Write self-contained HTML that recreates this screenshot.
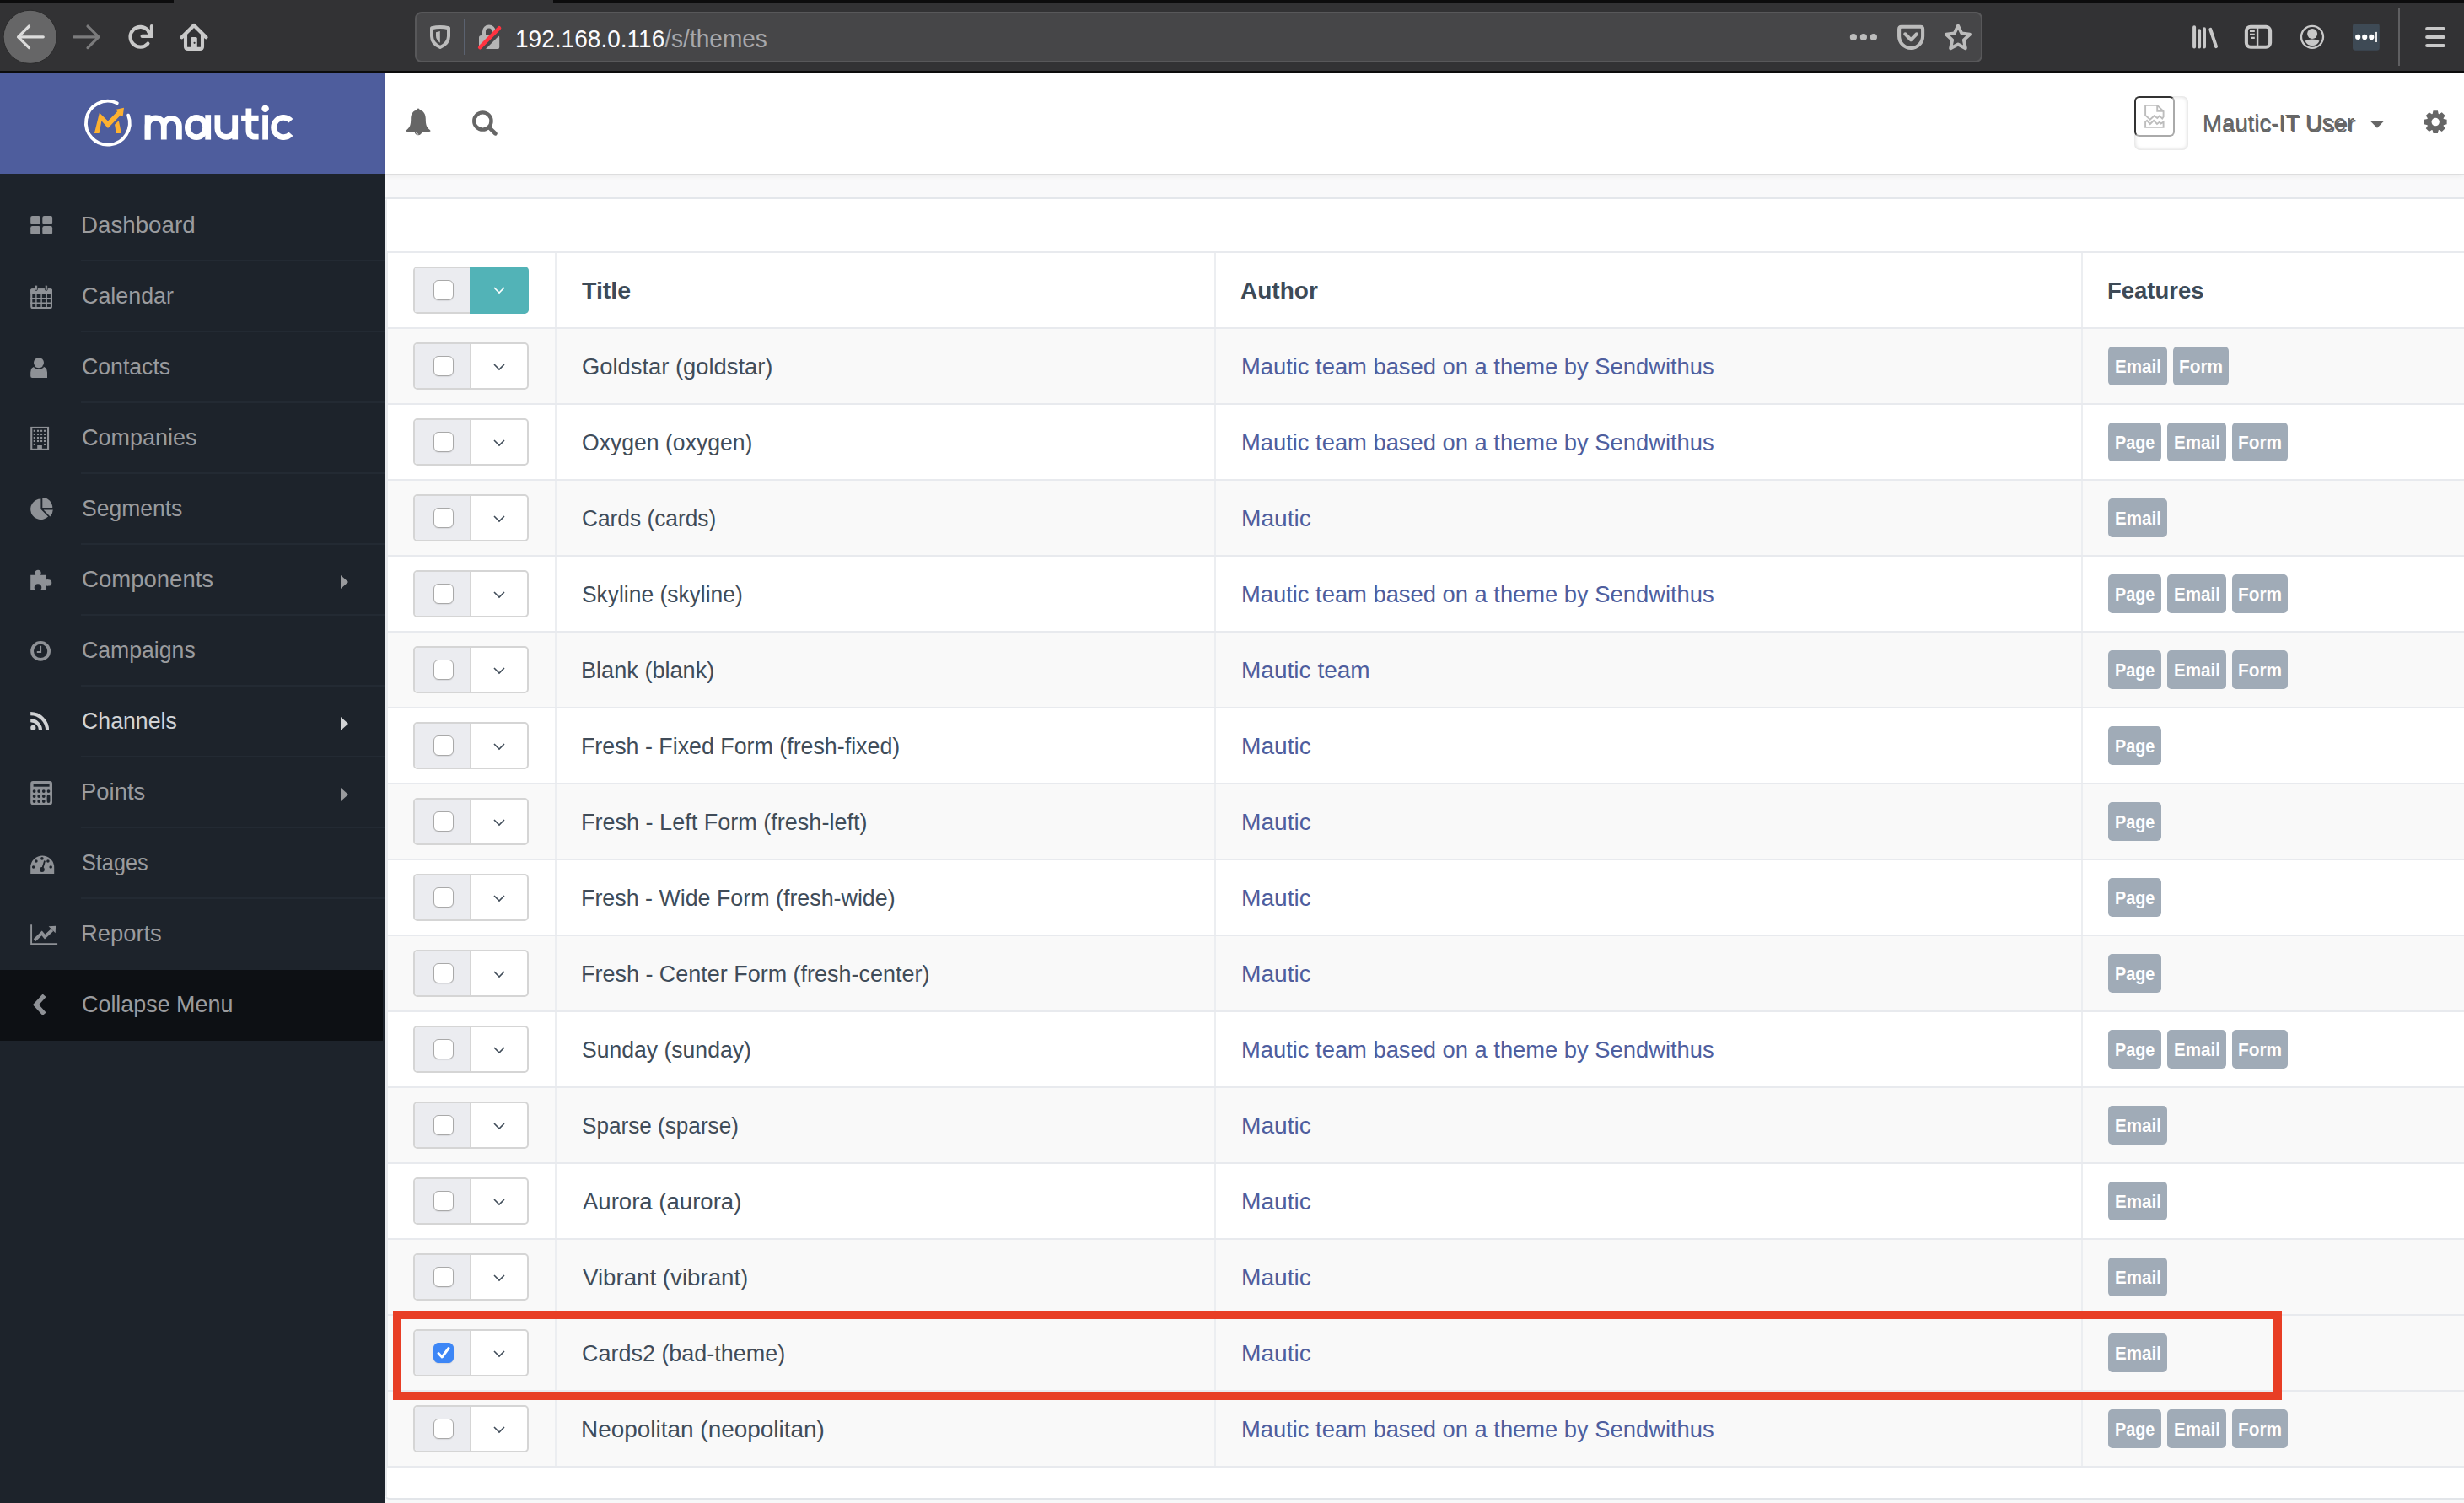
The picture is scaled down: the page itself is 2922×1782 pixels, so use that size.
<!DOCTYPE html>
<html><head><meta charset="utf-8"><style>
*{box-sizing:border-box;margin:0;padding:0}
html,body{width:2922px;height:1782px;overflow:hidden;background:#f7f7f8;font-family:"Liberation Sans",sans-serif;position:relative}
.abs{position:absolute}
#chrome{position:absolute;left:0;top:0;width:2922px;height:86px;background:#323234}
#tabstrip1{position:absolute;left:0;top:0;width:206px;height:4px;background:#0c0c0d}
#tabstrip2{position:absolute;left:656px;top:0;width:2266px;height:4px;background:#0c0c0d}
#chromeline{position:absolute;left:0;top:84px;width:2922px;height:2px;background:#0c0c0d}
#urlbar{display:none}
#url{position:absolute;left:611px;top:29px;font-size:30px;line-height:34px;color:#fbfbfe;white-space:nowrap;transform:scaleX(0.935);transform-origin:0 0}
#url span{color:#a8a8ab}
#sidebar{position:absolute;left:0;top:86px;width:456px;height:1696px;background:#1d232b}
#sbhead{position:absolute;left:0;top:86px;width:456px;height:120px;background:#4e5d9d}
.nav{position:absolute;left:0;width:456px;height:84px}
.nav .sep{position:absolute;left:96px;right:0;bottom:-1px;height:2px;background:#232a33}
.nav .t{position:absolute;left:98px;top:25px;font-size:27.5px;line-height:32px;color:#9a9b9e;white-space:nowrap}
.nav.act .t{color:#d2d3d5}
.nav svg{position:absolute}
.nav .arr{position:absolute;left:404px;top:37px;width:0;height:0;border-top:8px solid transparent;border-bottom:8px solid transparent;border-left:9.5px solid #9a9b9e}
.nav.act .arr{border-left-color:#d2d3d5}
#collapse{position:absolute;left:0;top:1150px;width:454px;height:84px;background:#0d1014}
#header{position:absolute;left:456px;top:86px;width:2466px;height:120px;background:#fff;box-shadow:0 1px 1px rgba(0,0,0,0.07),0 3px 7px rgba(0,0,0,0.06);z-index:2}
#band{position:absolute;left:456px;top:206px;width:2466px;height:30px;background:#f9f9fa;border-bottom:2px solid #e4e7eb}
#panel{position:absolute;left:456px;top:236px;width:2466px;height:1542px;background:#fff;border-left:1px solid #fff;border-bottom:2px solid #e2e5e9;border-radius:0 0 0 6px}
#panelb{position:absolute;left:457px;top:236px;width:2px;height:1539px;background:#e9ebee;border-radius:3px 0 0 3px}
.row{position:absolute;left:458px;width:2464px;height:90px;border-bottom:2px solid #e8eaee;border-left:2px solid #e9ebee}
.row.g{background:#f9f9f9}
.vd{position:absolute;top:0;bottom:0;width:2px;background:#eceef1}
.cell{position:absolute;top:2.5px;height:89px;line-height:89px;font-size:27px;white-space:nowrap}
.hdr .cell{top:1px}
.title{left:231px;color:#4b5866}
.author{left:1012px;color:#4e5e9e}
.feat{left:2041px}
.hd{font-weight:bold;color:#3d4a57;font-size:28px}
.btng{position:absolute;left:30px;top:16px;width:137px;height:56px;border:2px solid #d5d5d5;border-radius:5px;background:#fff;overflow:hidden}
.btng .l{position:absolute;left:0;top:0;width:67px;height:52px;background:#ebecf0;border-right:2px solid #d5d5d5}
.btng .teal{position:absolute;left:65px;top:-2px;width:70px;height:56px;background:#52b3b7;border-radius:0 5px 5px 0}
.btng.tealg{overflow:visible;background:#ebecf0;top:16px}
.btng.tealg .l{border-right:none;width:67px}
.cb{position:absolute;left:22px;top:13.5px;width:24px;height:24px;border:1.5px solid #a9a9a9;border-radius:6px;background:#fff;box-shadow:0 1px 1px rgba(0,0,0,0.08)}
.cb.chk{background:#3d86f6;border-color:#3d86f6}
.chev{position:absolute;left:91.5px;top:21px}
.teal .chev{left:26.5px;top:22px}
.bdg{position:absolute;top:21px;height:46px;background:#a0abb7;color:#fff;font-weight:bold;font-size:21.5px;border-radius:5px}
#redbox{position:absolute;left:466px;top:1554px;width:2240px;height:106px;border:10px solid #e83e25}

</style></head><body>
<div id="chrome"></div><div id="tabstrip1"></div><div id="tabstrip2"></div><div id="chromeline"></div>
<svg class="abs" style="left:0;top:0" width="660" height="86" viewBox="0 0 660 86">
 <circle cx="35.7" cy="43.8" r="31.6" fill="#666667" stroke="#2a2a2b" stroke-width="1"/>
 <path d="M21.5,43.8 H51.3 M34.5,31 L21.5,43.8 L34.5,56.6" fill="none" stroke="#dcdcdc" stroke-width="3.2" stroke-linecap="round" stroke-linejoin="round"/>
 <path d="M87.5,43.8 H117 M104,31 L117,43.8 L104,56.6" fill="none" stroke="#7b7b7c" stroke-width="3.2" stroke-linecap="round" stroke-linejoin="round"/>
 <path d="M175.4,51.6 A11.9,11.9 0 1 1 175.6,36.2" fill="none" stroke="#c9c9c9" stroke-width="4.2" stroke-linecap="round"/>
 <path d="M179.9,31.2 V42.9 H168.6" fill="none" stroke="#c9c9c9" stroke-width="4.2" stroke-linecap="round" stroke-linejoin="round"/><path d="M176,37.5 L179.9,42.9" stroke="#c9c9c9" stroke-width="4.2" stroke-linecap="round"/>
 <path d="M215.6,44.2 L230,30 L244.4,44.2" fill="none" stroke="#c9c9c9" stroke-width="4.4" stroke-linecap="round" stroke-linejoin="round"/>
 <path d="M220,41.5 V55.2 Q220,57.9 222.7,57.9 H237.3 Q240,57.9 240,55.2 V41.5" fill="none" stroke="#c9c9c9" stroke-width="4.1" stroke-linejoin="round"/>
 <path d="M226,58 V45.6 Q226,43.9 227.7,43.9 H232.1 Q233.8,43.9 233.8,45.6 V58 Z" fill="#c9c9c9"/>
 <circle cx="230.6" cy="50.8" r="1.1" fill="#323234"/>
</svg>
<div class="abs" style="left:492px;top:14px;width:1859px;height:60px;background:#464648;border:2px solid #58585a;border-radius:8px"></div>
<svg class="abs" style="left:490px;top:0" width="130" height="86" viewBox="490 0 130 86">
 <path d="M512,33.2 Q522,30.6 532,33.2 V43 Q532,51.5 522,56 Q512,51.5 512,43 Z" fill="none" stroke="#bcbcbc" stroke-width="4" stroke-linejoin="round"/>
 <path d="M517,38.3 L521.8,37 V50.8 Q517,47 517,42.5 Z" fill="#bcbcbc"/>
 <rect x="550" y="23" width="2" height="42" fill="#5b6270"/>
 <rect x="568" y="41.9" width="24.2" height="16.1" rx="2.6" fill="#b5b5b5"/>
 <path d="M574,42.5 V37.4 A5.9,5.9 0 0 1 585.8,37.4 V42.5" fill="none" stroke="#b5b5b5" stroke-width="4"/>
 <path d="M569.5,56.6 L592.5,33.4" stroke="#464648" stroke-width="8" stroke-linecap="round" transform="translate(1.2,1.2)"/>
 <path d="M569.2,56.2 L592,33.3" stroke="#ff3340" stroke-width="4.6" stroke-linecap="round"/>
</svg>
<svg class="abs" style="left:2180px;top:0" width="742" height="86" viewBox="2180 0 742 86">
 <circle cx="2197.9" cy="44" r="4.1" fill="#bcbcbc"/><circle cx="2209.9" cy="44" r="4.1" fill="#bcbcbc"/><circle cx="2221.9" cy="44" r="4.1" fill="#bcbcbc"/>
 <path d="M2252.1,43 V34.5 Q2252.1,31.8 2254.8,31.8 H2277.4 Q2280.1,31.8 2280.1,34.5 V43 A14,14 0 0 1 2252.1,43 Z" fill="none" stroke="#bcbcbc" stroke-width="4.1" stroke-linejoin="round"/>
 <path d="M2259.3,40.3 L2266.1,47.2 L2272.9,40.3" fill="none" stroke="#bcbcbc" stroke-width="4.1" stroke-linecap="round" stroke-linejoin="round"/>
 <path d="M2322,30.5 L2326.3,39.5 L2336,40.7 L2328.9,47.4 L2330.8,57.2 L2322,52.4 L2313.2,57.2 L2315.1,47.4 L2308,40.7 L2317.7,39.5 Z" fill="none" stroke="#bcbcbc" stroke-width="4" stroke-linejoin="round"/>
 <path d="M2602.1,32.3 V55.6 M2608.1,36.3 V55.6 M2614,34.2 V55.6 M2621.3,34.8 L2628,55.2" fill="none" stroke="#c8c8c8" stroke-width="4" stroke-linecap="round"/>
 <rect x="2663.9" y="31.8" width="28.2" height="24" rx="5" fill="none" stroke="#c8c8c8" stroke-width="4.1"/>
 <rect x="2675.9" y="32" width="2.4" height="24" fill="#c8c8c8"/>
 <path d="M2668,36.9 H2673.8 M2668,40.8 H2673.8 M2670,44.8 H2673.8" stroke="#c8c8c8" stroke-width="2.2"/>
 <circle cx="2742" cy="43.8" r="13" fill="none" stroke="#c8c8c8" stroke-width="2.3"/>
 <circle cx="2742.1" cy="40" r="6" fill="#c8c8c8"/>
 <path d="M2733.5,48.6 Q2742,44.5 2750.5,48.6 Q2748,54.3 2742,54.3 Q2736,54.3 2733.5,48.6 Z" fill="#c8c8c8"/>
 <rect x="2790" y="28" width="31.8" height="31.8" rx="3.2" fill="#3e4a55"/>
 <circle cx="2796.2" cy="43.9" r="3.1" fill="#fff"/><circle cx="2804.2" cy="43.9" r="3.1" fill="#fff"/><circle cx="2812.3" cy="43.9" r="3.1" fill="#fff"/>
 <rect x="2816.9" y="37.9" width="2.1" height="12.1" fill="#e8e8e8"/>
 <rect x="2844" y="10" width="2" height="68" fill="#5f5f61"/>
 <path d="M2878.1,33.9 H2897.9 M2878.1,43.9 H2897.9 M2878.1,54 H2897.9" stroke="#c8c8c8" stroke-width="4" stroke-linecap="round"/>
</svg>

<div id="url">192.168.0.116<span>/s/themes</span></div>
<div id="sidebar"></div><div id="sbhead"></div>
<svg class="abs" style="left:80px;top:100px" width="290" height="95" viewBox="80 100 290 95">
 <path d="M152.1,136.6 A25.9,25.9 0 1 1 138.85,122.3" fill="none" stroke="#fff" stroke-width="3.8" stroke-linecap="round"/>
 <path d="M111.9,157.9 L117.6,157.9 L120.4,143.2 L128,151.9 L143.2,136.2 L145.6,138.3 L147,127.8 L136.8,129.9 L139.3,132.1 L128,143.6 L117.9,133.7 Z" fill="#fdb130"/>
 <path d="M136,147.8 L140.8,143 L143.9,157.9 L137.9,157.9 Z" fill="#fdb130"/>
 <g fill="none" stroke="#fff" stroke-width="6.8">
  <path d="M175.1,165.6 V149.5 A9.6,9.6 0 0 1 194.3,149.5 V165.6 M194.3,149.5 A9.05,9.05 0 0 1 212.4,149.5 V165.6"/>
  <path d="M175.1,165.6 V136.2"/>
  <ellipse cx="233" cy="151" rx="10.6" ry="11.6"/>
  <path d="M246.7,136.2 V165.6"/>
  <path d="M257.9,136.2 V152 A10.4,10.4 0 0 0 278.7,152 M278.7,136.2 V165.6"/>
  <path d="M294.9,128.6 V154 Q294.9,162.2 302.5,162.2 H306.6 M286.1,140.1 H306.6"/>
  <path d="M314.6,136.2 V165.6"/>
  <path d="M344.9,143.3 A11.6,11.6 0 1 0 344.9,158.7"/>
 </g>
 <circle cx="314.6" cy="128.8" r="4.3" fill="#fff"/>
</svg>

<div class="nav" style="top:225px"><div style="position:absolute;left:96.18px;top:22px;font-size:27.5px;line-height:40px;color:#9a9b9e;white-space:nowrap;transform:scaleX(1.0076);transform-origin:0 0;">Dashboard</div><div class="sep"></div></div>
<div class="nav" style="top:309px"><div style="position:absolute;left:97.22px;top:22px;font-size:27.5px;line-height:40px;color:#9a9b9e;white-space:nowrap;transform:scaleX(0.9764);transform-origin:0 0;">Calendar</div><div class="sep"></div></div>
<div class="nav" style="top:393px"><div style="position:absolute;left:97.23px;top:22px;font-size:27.5px;line-height:40px;color:#9a9b9e;white-space:nowrap;transform:scaleX(0.9692);transform-origin:0 0;">Contacts</div><div class="sep"></div></div>
<div class="nav" style="top:477px"><div style="position:absolute;left:97.22px;top:22px;font-size:27.5px;line-height:40px;color:#9a9b9e;white-space:nowrap;transform:scaleX(0.9818);transform-origin:0 0;">Companies</div><div class="sep"></div></div>
<div class="nav" style="top:561px"><div style="position:absolute;left:97.24px;top:22px;font-size:27.5px;line-height:40px;color:#9a9b9e;white-space:nowrap;transform:scaleX(0.9639);transform-origin:0 0;">Segments</div><div class="sep"></div></div>
<div class="nav" style="top:645px"><div style="position:absolute;left:97.20px;top:22px;font-size:27.5px;line-height:40px;color:#9a9b9e;white-space:nowrap;transform:scaleX(1.0013);transform-origin:0 0;">Components</div><div class="arr"></div><div class="sep"></div></div>
<div class="nav" style="top:729px"><div style="position:absolute;left:97.23px;top:22px;font-size:27.5px;line-height:40px;color:#9a9b9e;white-space:nowrap;transform:scaleX(0.9686);transform-origin:0 0;">Campaigns</div><div class="sep"></div></div>
<div class="nav act" style="top:813px"><div style="position:absolute;left:97.23px;top:22px;font-size:27.5px;line-height:40px;color:#d2d3d5;white-space:nowrap;transform:scaleX(0.9711);transform-origin:0 0;">Channels</div><div class="arr"></div><div class="sep"></div></div>
<div class="nav" style="top:897px"><div style="position:absolute;left:96.21px;top:22px;font-size:27.5px;line-height:40px;color:#9a9b9e;white-space:nowrap;transform:scaleX(0.9973);transform-origin:0 0;">Points</div><div class="arr"></div><div class="sep"></div></div>
<div class="nav" style="top:981px"><div style="position:absolute;left:97.28px;top:22px;font-size:27.5px;line-height:40px;color:#9a9b9e;white-space:nowrap;transform:scaleX(0.9179);transform-origin:0 0;">Stages</div><div class="sep"></div></div>
<div class="nav" style="top:1065px"><div style="position:absolute;left:96.21px;top:22px;font-size:27.5px;line-height:40px;color:#9a9b9e;white-space:nowrap;transform:scaleX(0.9946);transform-origin:0 0;">Reports</div></div>
<svg class="abs" style="left:0;top:200px;z-index:2" width="456" height="1050" viewBox="0 200 456 1050">
<rect x="36.2" y="255.9" width="11.8" height="10.1" rx="2.2" fill="#8e9196"/>
<rect x="50.3" y="255.9" width="11.8" height="10.1" rx="2.2" fill="#8e9196"/>
<rect x="36.2" y="268.0" width="11.8" height="10.1" rx="2.2" fill="#8e9196"/>
<rect x="50.3" y="268.0" width="11.8" height="10.1" rx="2.2" fill="#8e9196"/>
<rect x="37.25" y="343.25" width="23.7" height="21.7" rx="1.5" fill="none" stroke="#8e9196" stroke-width="2.1"/><rect x="36.2" y="342.2" width="25.8" height="6.3" rx="1.5" fill="#8e9196"/><path d="M36.2,353.6 H62 M36.2,359.2 H62 M42.9,348 V366 M49.1,348 V366 M55.2,348 V366" stroke="#8e9196" stroke-width="1.4"/>
<rect x="41.5" y="338" width="2.9" height="6.5" rx="1.4" fill="#8e9196"/><rect x="53.4" y="338" width="2.9" height="6.5" rx="1.4" fill="#8e9196"/>
<rect x="41.5" y="338" width="2.9" height="6.5" rx="1.4" fill="none" stroke="#1d232b" stroke-width="0.8"/><rect x="53.4" y="338" width="2.9" height="6.5" rx="1.4" fill="none" stroke="#1d232b" stroke-width="0.8"/>
<circle cx="46" cy="429.9" r="6" fill="#8e9196"/>
<path d="M36.2,448.1 V441.5 Q36.2,434.5 43,434.5 H49.2 Q56,434.5 56,441.5 V448.1 Q56,448.1 54,448.1 H38.2 Q36.2,448.1 36.2,446 Z" fill="#8e9196"/>
<path d="M40.5,435.2 Q46,438.8 51.5,435.2" fill="none" stroke="#1d232b" stroke-width="1.4"/>
<rect x="37.25" y="506.95" width="19.8" height="25.9" fill="none" stroke="#8e9196" stroke-width="2.1"/>
<rect x="39.75" y="509.75" width="2.1" height="2.1" fill="#8e9196"/>
<rect x="39.75" y="513.95" width="2.1" height="2.1" fill="#8e9196"/>
<rect x="39.75" y="517.95" width="2.1" height="2.1" fill="#8e9196"/>
<rect x="39.75" y="521.95" width="2.1" height="2.1" fill="#8e9196"/>
<rect x="43.95" y="509.75" width="2.1" height="2.1" fill="#8e9196"/>
<rect x="43.95" y="513.95" width="2.1" height="2.1" fill="#8e9196"/>
<rect x="43.95" y="517.95" width="2.1" height="2.1" fill="#8e9196"/>
<rect x="43.95" y="521.95" width="2.1" height="2.1" fill="#8e9196"/>
<rect x="48.050000000000004" y="509.75" width="2.1" height="2.1" fill="#8e9196"/>
<rect x="48.050000000000004" y="513.95" width="2.1" height="2.1" fill="#8e9196"/>
<rect x="48.050000000000004" y="517.95" width="2.1" height="2.1" fill="#8e9196"/>
<rect x="48.050000000000004" y="521.95" width="2.1" height="2.1" fill="#8e9196"/>
<rect x="51.95" y="509.75" width="2.1" height="2.1" fill="#8e9196"/>
<rect x="51.95" y="513.95" width="2.1" height="2.1" fill="#8e9196"/>
<rect x="51.95" y="517.95" width="2.1" height="2.1" fill="#8e9196"/>
<rect x="51.95" y="521.95" width="2.1" height="2.1" fill="#8e9196"/>
<rect x="39.75" y="525.9" width="2.1" height="2.1" fill="#8e9196"/>
<rect x="51.95" y="525.9" width="2.1" height="2.1" fill="#8e9196"/>
<rect x="44.2" y="528" width="5.7" height="5" fill="#8e9196"/>
<path d="M48.4,603.8 V591.55 A12.25,12.25 0 1 0 57.06,612.46 Z" fill="#8e9196"/>
<path d="M50.3,602 V590.1 A11.9,11.9 0 0 1 62.2,602 Z" fill="#8e9196"/>
<path d="M51.6,604.6 H62.8 A11.8,11.8 0 0 1 59.4,612.4 Z" fill="#8e9196"/>
<path d="M36.2,681.7 H42.2 Q41.2,680.5 41.6,678.6 A3.6,3.6 0 0 1 48.6,678.6 Q49,680.5 48,681.7 H54.1 V687.6 Q55.5,686.8 57.6,687.2 A3.6,3.6 0 0 1 57.6,694.6 Q55.5,695 54.1,694 V699 H48.5 Q49.8,697.5 49.2,695.6 A4.3,4.3 0 0 0 40.8,695.6 Q40.2,697.5 41.5,699 H36.2 Z" fill="#8e9196"/>
<circle cx="48.1" cy="771.9" r="10" fill="none" stroke="#8e9196" stroke-width="3.8"/>
<path d="M48.1,765.8 V773 H43.8" fill="none" stroke="#8e9196" stroke-width="2"/>
<circle cx="39.3" cy="862.9" r="3.1" fill="#d0d1d3"/>
<path d="M36.2,854.1 A11.9,11.9 0 0 1 48.1,866 M36.2,846.1 A19.9,19.9 0 0 1 56.1,866" fill="none" stroke="#d0d1d3" stroke-width="4.1"/>
<rect x="37.3" y="927.1" width="23.6" height="26" rx="1.8" fill="none" stroke="#8e9196" stroke-width="2.2"/>
<rect x="37.3" y="927.1" width="23.6" height="7.6" fill="#8e9196"/>
<rect x="39.6" y="929.3" width="19" height="3.4" fill="#1d232b"/>
<rect x="37.3" y="934" width="23.6" height="18" fill="#8e9196"/>
<circle cx="40.6" cy="938.1" r="1.9" fill="#1d232b"/>
<circle cx="46.2" cy="938.1" r="1.9" fill="#1d232b"/>
<circle cx="51.8" cy="938.1" r="1.9" fill="#1d232b"/>
<circle cx="40.6" cy="944.1" r="1.9" fill="#1d232b"/>
<circle cx="46.2" cy="944.1" r="1.9" fill="#1d232b"/>
<circle cx="51.8" cy="944.1" r="1.9" fill="#1d232b"/>
<circle cx="40.6" cy="950.0" r="1.9" fill="#1d232b"/>
<circle cx="46.2" cy="950.0" r="1.9" fill="#1d232b"/>
<circle cx="51.8" cy="950.0" r="1.9" fill="#1d232b"/>
<circle cx="57.5" cy="938.1" r="1.9" fill="#1d232b"/>
<rect x="55.6" y="942.2" width="3.8" height="9.7" rx="1.9" fill="#1d232b"/>
<path d="M36.2,1036.1 V1028.5 A14,14 0 0 1 64.2,1028.5 V1036.1 Z" fill="#8e9196"/>
<circle cx="42.9" cy="1021" r="1.8" fill="#1d232b"/>
<circle cx="49.9" cy="1017.9" r="1.8" fill="#1d232b"/>
<circle cx="56.9" cy="1021" r="1.8" fill="#1d232b"/>
<circle cx="39.7" cy="1028" r="1.8" fill="#1d232b"/>
<circle cx="60.2" cy="1028" r="1.8" fill="#1d232b"/>
<circle cx="49.9" cy="1031" r="2.9" fill="#1d232b"/>
<path d="M49.9,1031 L52.9,1021.3" stroke="#1d232b" stroke-width="1.9" stroke-linecap="round"/>
<path d="M37.1,1096.2 V1119.1 H68.1" fill="none" stroke="#8e9196" stroke-width="1.9"/>
<path d="M41.1,1114.6 L49.6,1106.3 L53.2,1110.6 L61.9,1102.6" fill="none" stroke="#8e9196" stroke-width="3.9"/>
<path d="M57.6,1098.2 L66.1,1097.8 L65.7,1106.2 Z" fill="#8e9196"/>
</svg>
<div id="collapse"><svg class="abs" style="left:36px;top:24px" width="24" height="36" viewBox="0 0 24 36"><path d="M16.6 6.2 L6.6 17.3 L16.6 28.3" fill="none" stroke="#8e9196" stroke-width="5.4" stroke-linejoin="miter"/></svg><div style="position:absolute;left:97.22px;top:21px;font-size:27.5px;line-height:40px;color:#9a9b9e;white-space:nowrap;transform:scaleX(0.9779);transform-origin:0 0;">Collapse Menu</div></div>
<div id="header"></div>
<svg class="abs" style="left:456px;top:86px;z-index:3" width="2466" height="120" viewBox="456 86 2466 120">
<path d="M496,130.6 C489.5,130.6 487.2,135.5 487.2,141 C487.2,148.5 486,150.8 482,154.2 Q480.6,155.9 483,155.9 H509 Q511.4,155.9 510,154.2 C506,150.8 504.8,148.5 504.8,141 C504.8,135.5 502.5,130.6 496,130.6 Z" fill="#666666"/>
<circle cx="496" cy="130.2" r="1.7" fill="#666666"/>
<path d="M491.7,156 A4.3,4.3 0 0 0 500.3,156 Z" fill="#666666"/>
<path d="M493.6,156.6 A2.6,2.6 0 0 0 496.2,159.2" fill="none" stroke="#fff" stroke-width="0.9"/>
<circle cx="572.4" cy="143.5" r="10.15" fill="none" stroke="#666666" stroke-width="4.4"/>
<path d="M580.3,151.4 L587.4,158.3" stroke="#666666" stroke-width="4.8" stroke-linecap="round"/>
<path d="M2811.4,144.1 H2826.6 L2819,151.7 Z" fill="#666666"/>
<path d="M2884.67,134.92 L2885.47,131.18 L2890.93,131.18 L2891.73,134.92 L2892.55,135.26 L2895.76,133.18 L2899.62,137.04 L2897.54,140.25 L2897.88,141.07 L2901.62,141.87 L2901.62,147.33 L2897.88,148.13 L2897.54,148.95 L2899.62,152.16 L2895.76,156.02 L2892.55,153.94 L2891.73,154.28 L2890.93,158.02 L2885.47,158.02 L2884.67,154.28 L2883.85,153.94 L2880.64,156.02 L2876.78,152.16 L2878.86,148.95 L2878.52,148.13 L2874.78,147.33 L2874.78,141.87 L2878.52,141.07 L2878.86,140.25 L2876.78,137.04 L2880.64,133.18 L2883.85,135.26 Z M2892.8999999999996,144.6 A4.7,4.7 0 1 0 2883.5,144.6 A4.7,4.7 0 1 0 2892.8999999999996,144.6 Z" fill="#666666" fill-rule="evenodd"/>
</svg>
<div class="abs" style="left:2531px;top:114px;width:64px;height:64px;border-radius:7px;background:#fff;box-shadow:inset 0 0 4px 1px rgba(0,0,0,0.14);z-index:3"></div>
<div class="abs" style="left:2531px;top:114px;width:48px;height:48px;border-radius:6px;border-top:2px solid #333;border-left:2px solid #333;border-right:2px solid #aaa;border-bottom:2px solid #aaa;background:#fff;z-index:3"></div>
<svg class="abs" style="left:2540px;top:120px;z-index:4" width="30" height="36" viewBox="2540 120 30 36"><path d="M2544.1,136.6 V124.9 H2558.2 L2565.6,131.9 V138.5 L2564.2,140.6 L2561,137.4 L2558.3,140 L2554.6,137.2 L2549.8,141.6 Z" fill="none" stroke="#bdbdbd" stroke-width="1.9" stroke-linejoin="miter"/><path d="M2558.2,124.9 V131.9 H2565.6" fill="none" stroke="#bdbdbd" stroke-width="1.9"/><path d="M2544.1,144.6 L2546.1,142.8 L2549.8,147 L2554.1,142.8 L2558,147 L2561,144.6 L2562.6,146.5 L2565.6,144.6 V150.9 H2544.1 Z" fill="none" stroke="#bdbdbd" stroke-width="1.9" stroke-linejoin="miter"/></svg>
<div class="abs" style="left:2612px;top:130px;font-size:27.5px;line-height:32px;color:#666;white-space:nowrap;z-index:3">Mautic-IT User</div>
<div style="position:absolute;left:2611.98px;top:128px;font-size:27.5px;line-height:40px;color:#666;white-space:nowrap;transform:scaleX(1.0112);transform-origin:0 0;z-index:3">Mautic-IT User</div>
<div id="band"></div><div id="panel"></div><div id="panelb"></div>
<div class="row hdr" style="top:298px;border-top:2px solid #e8eaee;height:92px"><div class="vd" style="left:198px"></div><div class="vd" style="left:980px"></div><div class="vd" style="left:2008px"></div><div class="btng tealg"><div class="l"><div class="cb"></div></div><div class="teal"><svg class="chev" width="16" height="12" viewBox="0 0 16 12"><path d="M2 3 L8 9 L14 3" fill="none" stroke="#fff" stroke-width="1.6"/></svg></div></div><div style="position:absolute;left:230.00px;top:25px;font-size:28px;line-height:40px;font-weight:bold;color:#3d4a57;white-space:nowrap;transform:scaleX(1.0179);transform-origin:0 0;">Title</div><div style="position:absolute;left:1011.40px;top:25px;font-size:28px;line-height:40px;font-weight:bold;color:#3d4a57;white-space:nowrap;transform:scaleX(1.0011);transform-origin:0 0;">Author</div><div style="position:absolute;left:2039.44px;top:25px;font-size:28px;line-height:40px;font-weight:bold;color:#3d4a57;white-space:nowrap;transform:scaleX(0.9807);transform-origin:0 0;">Features</div></div>
<div class="row g" style="top:390px"><div class="vd" style="left:198px"></div><div class="vd" style="left:980px"></div><div class="vd" style="left:2008px"></div><div class="btng"><div class="l"><div class="cb"></div></div><svg class="chev" width="16" height="12" viewBox="0 0 16 12"><path d="M2 3 L8 9 L14 3" fill="none" stroke="#404c59" stroke-width="1.6"/></svg></div><div style="position:absolute;left:229.99px;top:25px;font-size:27px;line-height:40px;color:#404c59;white-space:nowrap;transform:scaleX(1.0127);transform-origin:0 0;">Goldstar (goldstar)</div><div style="position:absolute;left:1012.18px;top:25px;font-size:27px;line-height:40px;color:#4e5e9e;white-space:nowrap;transform:scaleX(1.0123);transform-origin:0 0;">Mautic team based on a theme by Sendwithus</div><div class="bdg" style="left:2040px;width:70px"><div style="position:absolute;left:7.74px;top:9px;line-height:30px;transform:scaleX(0.9564);transform-origin:0 0">Email</div></div><div class="bdg" style="left:2116.8px;width:66.5px"><div style="position:absolute;left:7.13px;top:9px;line-height:30px;transform:scaleX(0.9673);transform-origin:0 0">Form</div></div></div>
<div class="row" style="top:480px"><div class="vd" style="left:198px"></div><div class="vd" style="left:980px"></div><div class="vd" style="left:2008px"></div><div class="btng"><div class="l"><div class="cb"></div></div><svg class="chev" width="16" height="12" viewBox="0 0 16 12"><path d="M2 3 L8 9 L14 3" fill="none" stroke="#404c59" stroke-width="1.6"/></svg></div><div style="position:absolute;left:230.02px;top:25px;font-size:27px;line-height:40px;color:#404c59;white-space:nowrap;transform:scaleX(0.9847);transform-origin:0 0;">Oxygen (oxygen)</div><div style="position:absolute;left:1012.18px;top:25px;font-size:27px;line-height:40px;color:#4e5e9e;white-space:nowrap;transform:scaleX(1.0123);transform-origin:0 0;">Mautic team based on a theme by Sendwithus</div><div class="bdg" style="left:2040px;width:63px"><div style="position:absolute;left:7.58px;top:9px;line-height:30px;transform:scaleX(0.9200);transform-origin:0 0">Page</div></div><div class="bdg" style="left:2109.8px;width:70px"><div style="position:absolute;left:7.74px;top:9px;line-height:30px;transform:scaleX(0.9564);transform-origin:0 0">Email</div></div><div class="bdg" style="left:2186.6000000000004px;width:66.5px"><div style="position:absolute;left:7.13px;top:9px;line-height:30px;transform:scaleX(0.9673);transform-origin:0 0">Form</div></div></div>
<div class="row g" style="top:570px"><div class="vd" style="left:198px"></div><div class="vd" style="left:980px"></div><div class="vd" style="left:2008px"></div><div class="btng"><div class="l"><div class="cb"></div></div><svg class="chev" width="16" height="12" viewBox="0 0 16 12"><path d="M2 3 L8 9 L14 3" fill="none" stroke="#404c59" stroke-width="1.6"/></svg></div><div style="position:absolute;left:230.03px;top:25px;font-size:27px;line-height:40px;color:#404c59;white-space:nowrap;transform:scaleX(0.9733);transform-origin:0 0;">Cards (cards)</div><div style="position:absolute;left:1012.12px;top:25px;font-size:27px;line-height:40px;color:#4e5e9e;white-space:nowrap;transform:scaleX(1.0416);transform-origin:0 0;">Mautic</div><div class="bdg" style="left:2040px;width:70px"><div style="position:absolute;left:7.74px;top:9px;line-height:30px;transform:scaleX(0.9564);transform-origin:0 0">Email</div></div></div>
<div class="row" style="top:660px"><div class="vd" style="left:198px"></div><div class="vd" style="left:980px"></div><div class="vd" style="left:2008px"></div><div class="btng"><div class="l"><div class="cb"></div></div><svg class="chev" width="16" height="12" viewBox="0 0 16 12"><path d="M2 3 L8 9 L14 3" fill="none" stroke="#404c59" stroke-width="1.6"/></svg></div><div style="position:absolute;left:230.02px;top:25px;font-size:27px;line-height:40px;color:#404c59;white-space:nowrap;transform:scaleX(0.9777);transform-origin:0 0;">Skyline (skyline)</div><div style="position:absolute;left:1012.18px;top:25px;font-size:27px;line-height:40px;color:#4e5e9e;white-space:nowrap;transform:scaleX(1.0123);transform-origin:0 0;">Mautic team based on a theme by Sendwithus</div><div class="bdg" style="left:2040px;width:63px"><div style="position:absolute;left:7.58px;top:9px;line-height:30px;transform:scaleX(0.9200);transform-origin:0 0">Page</div></div><div class="bdg" style="left:2109.8px;width:70px"><div style="position:absolute;left:7.74px;top:9px;line-height:30px;transform:scaleX(0.9564);transform-origin:0 0">Email</div></div><div class="bdg" style="left:2186.6000000000004px;width:66.5px"><div style="position:absolute;left:7.13px;top:9px;line-height:30px;transform:scaleX(0.9673);transform-origin:0 0">Form</div></div></div>
<div class="row g" style="top:750px"><div class="vd" style="left:198px"></div><div class="vd" style="left:980px"></div><div class="vd" style="left:2008px"></div><div class="btng"><div class="l"><div class="cb"></div></div><svg class="chev" width="16" height="12" viewBox="0 0 16 12"><path d="M2 3 L8 9 L14 3" fill="none" stroke="#404c59" stroke-width="1.6"/></svg></div><div style="position:absolute;left:228.99px;top:25px;font-size:27px;line-height:40px;color:#404c59;white-space:nowrap;transform:scaleX(1.0045);transform-origin:0 0;">Blank (blank)</div><div style="position:absolute;left:1012.12px;top:25px;font-size:27px;line-height:40px;color:#4e5e9e;white-space:nowrap;transform:scaleX(1.0385);transform-origin:0 0;">Mautic team</div><div class="bdg" style="left:2040px;width:63px"><div style="position:absolute;left:7.58px;top:9px;line-height:30px;transform:scaleX(0.9200);transform-origin:0 0">Page</div></div><div class="bdg" style="left:2109.8px;width:70px"><div style="position:absolute;left:7.74px;top:9px;line-height:30px;transform:scaleX(0.9564);transform-origin:0 0">Email</div></div><div class="bdg" style="left:2186.6000000000004px;width:66.5px"><div style="position:absolute;left:7.13px;top:9px;line-height:30px;transform:scaleX(0.9673);transform-origin:0 0">Form</div></div></div>
<div class="row" style="top:840px"><div class="vd" style="left:198px"></div><div class="vd" style="left:980px"></div><div class="vd" style="left:2008px"></div><div class="btng"><div class="l"><div class="cb"></div></div><svg class="chev" width="16" height="12" viewBox="0 0 16 12"><path d="M2 3 L8 9 L14 3" fill="none" stroke="#404c59" stroke-width="1.6"/></svg></div><div style="position:absolute;left:229.01px;top:25px;font-size:27px;line-height:40px;color:#404c59;white-space:nowrap;transform:scaleX(0.9926);transform-origin:0 0;">Fresh - Fixed Form (fresh-fixed)</div><div style="position:absolute;left:1012.12px;top:25px;font-size:27px;line-height:40px;color:#4e5e9e;white-space:nowrap;transform:scaleX(1.0416);transform-origin:0 0;">Mautic</div><div class="bdg" style="left:2040px;width:63px"><div style="position:absolute;left:7.58px;top:9px;line-height:30px;transform:scaleX(0.9200);transform-origin:0 0">Page</div></div></div>
<div class="row g" style="top:930px"><div class="vd" style="left:198px"></div><div class="vd" style="left:980px"></div><div class="vd" style="left:2008px"></div><div class="btng"><div class="l"><div class="cb"></div></div><svg class="chev" width="16" height="12" viewBox="0 0 16 12"><path d="M2 3 L8 9 L14 3" fill="none" stroke="#404c59" stroke-width="1.6"/></svg></div><div style="position:absolute;left:229.00px;top:25px;font-size:27px;line-height:40px;color:#404c59;white-space:nowrap;transform:scaleX(1.0012);transform-origin:0 0;">Fresh - Left Form (fresh-left)</div><div style="position:absolute;left:1012.12px;top:25px;font-size:27px;line-height:40px;color:#4e5e9e;white-space:nowrap;transform:scaleX(1.0416);transform-origin:0 0;">Mautic</div><div class="bdg" style="left:2040px;width:63px"><div style="position:absolute;left:7.58px;top:9px;line-height:30px;transform:scaleX(0.9200);transform-origin:0 0">Page</div></div></div>
<div class="row" style="top:1020px"><div class="vd" style="left:198px"></div><div class="vd" style="left:980px"></div><div class="vd" style="left:2008px"></div><div class="btng"><div class="l"><div class="cb"></div></div><svg class="chev" width="16" height="12" viewBox="0 0 16 12"><path d="M2 3 L8 9 L14 3" fill="none" stroke="#404c59" stroke-width="1.6"/></svg></div><div style="position:absolute;left:229.01px;top:25px;font-size:27px;line-height:40px;color:#404c59;white-space:nowrap;transform:scaleX(0.9935);transform-origin:0 0;">Fresh - Wide Form (fresh-wide)</div><div style="position:absolute;left:1012.12px;top:25px;font-size:27px;line-height:40px;color:#4e5e9e;white-space:nowrap;transform:scaleX(1.0416);transform-origin:0 0;">Mautic</div><div class="bdg" style="left:2040px;width:63px"><div style="position:absolute;left:7.58px;top:9px;line-height:30px;transform:scaleX(0.9200);transform-origin:0 0">Page</div></div></div>
<div class="row g" style="top:1110px"><div class="vd" style="left:198px"></div><div class="vd" style="left:980px"></div><div class="vd" style="left:2008px"></div><div class="btng"><div class="l"><div class="cb"></div></div><svg class="chev" width="16" height="12" viewBox="0 0 16 12"><path d="M2 3 L8 9 L14 3" fill="none" stroke="#404c59" stroke-width="1.6"/></svg></div><div style="position:absolute;left:229.00px;top:25px;font-size:27px;line-height:40px;color:#404c59;white-space:nowrap;transform:scaleX(0.9983);transform-origin:0 0;">Fresh - Center Form (fresh-center)</div><div style="position:absolute;left:1012.12px;top:25px;font-size:27px;line-height:40px;color:#4e5e9e;white-space:nowrap;transform:scaleX(1.0416);transform-origin:0 0;">Mautic</div><div class="bdg" style="left:2040px;width:63px"><div style="position:absolute;left:7.58px;top:9px;line-height:30px;transform:scaleX(0.9200);transform-origin:0 0">Page</div></div></div>
<div class="row" style="top:1200px"><div class="vd" style="left:198px"></div><div class="vd" style="left:980px"></div><div class="vd" style="left:2008px"></div><div class="btng"><div class="l"><div class="cb"></div></div><svg class="chev" width="16" height="12" viewBox="0 0 16 12"><path d="M2 3 L8 9 L14 3" fill="none" stroke="#404c59" stroke-width="1.6"/></svg></div><div style="position:absolute;left:230.02px;top:25px;font-size:27px;line-height:40px;color:#404c59;white-space:nowrap;transform:scaleX(0.9837);transform-origin:0 0;">Sunday (sunday)</div><div style="position:absolute;left:1012.18px;top:25px;font-size:27px;line-height:40px;color:#4e5e9e;white-space:nowrap;transform:scaleX(1.0123);transform-origin:0 0;">Mautic team based on a theme by Sendwithus</div><div class="bdg" style="left:2040px;width:63px"><div style="position:absolute;left:7.58px;top:9px;line-height:30px;transform:scaleX(0.9200);transform-origin:0 0">Page</div></div><div class="bdg" style="left:2109.8px;width:70px"><div style="position:absolute;left:7.74px;top:9px;line-height:30px;transform:scaleX(0.9564);transform-origin:0 0">Email</div></div><div class="bdg" style="left:2186.6000000000004px;width:66.5px"><div style="position:absolute;left:7.13px;top:9px;line-height:30px;transform:scaleX(0.9673);transform-origin:0 0">Form</div></div></div>
<div class="row g" style="top:1290px"><div class="vd" style="left:198px"></div><div class="vd" style="left:980px"></div><div class="vd" style="left:2008px"></div><div class="btng"><div class="l"><div class="cb"></div></div><svg class="chev" width="16" height="12" viewBox="0 0 16 12"><path d="M2 3 L8 9 L14 3" fill="none" stroke="#404c59" stroke-width="1.6"/></svg></div><div style="position:absolute;left:230.03px;top:25px;font-size:27px;line-height:40px;color:#404c59;white-space:nowrap;transform:scaleX(0.9679);transform-origin:0 0;">Sparse (sparse)</div><div style="position:absolute;left:1012.12px;top:25px;font-size:27px;line-height:40px;color:#4e5e9e;white-space:nowrap;transform:scaleX(1.0416);transform-origin:0 0;">Mautic</div><div class="bdg" style="left:2040px;width:70px"><div style="position:absolute;left:7.74px;top:9px;line-height:30px;transform:scaleX(0.9564);transform-origin:0 0">Email</div></div></div>
<div class="row" style="top:1380px"><div class="vd" style="left:198px"></div><div class="vd" style="left:980px"></div><div class="vd" style="left:2008px"></div><div class="btng"><div class="l"><div class="cb"></div></div><svg class="chev" width="16" height="12" viewBox="0 0 16 12"><path d="M2 3 L8 9 L14 3" fill="none" stroke="#404c59" stroke-width="1.6"/></svg></div><div style="position:absolute;left:231.00px;top:25px;font-size:27px;line-height:40px;color:#404c59;white-space:nowrap;transform:scaleX(1.0202);transform-origin:0 0;">Aurora (aurora)</div><div style="position:absolute;left:1012.12px;top:25px;font-size:27px;line-height:40px;color:#4e5e9e;white-space:nowrap;transform:scaleX(1.0416);transform-origin:0 0;">Mautic</div><div class="bdg" style="left:2040px;width:70px"><div style="position:absolute;left:7.74px;top:9px;line-height:30px;transform:scaleX(0.9564);transform-origin:0 0">Email</div></div></div>
<div class="row g" style="top:1470px"><div class="vd" style="left:198px"></div><div class="vd" style="left:980px"></div><div class="vd" style="left:2008px"></div><div class="btng"><div class="l"><div class="cb"></div></div><svg class="chev" width="16" height="12" viewBox="0 0 16 12"><path d="M2 3 L8 9 L14 3" fill="none" stroke="#404c59" stroke-width="1.6"/></svg></div><div style="position:absolute;left:231.00px;top:25px;font-size:27px;line-height:40px;color:#404c59;white-space:nowrap;transform:scaleX(1.0247);transform-origin:0 0;">Vibrant (vibrant)</div><div style="position:absolute;left:1012.12px;top:25px;font-size:27px;line-height:40px;color:#4e5e9e;white-space:nowrap;transform:scaleX(1.0416);transform-origin:0 0;">Mautic</div><div class="bdg" style="left:2040px;width:70px"><div style="position:absolute;left:7.74px;top:9px;line-height:30px;transform:scaleX(0.9564);transform-origin:0 0">Email</div></div></div>
<div class="row g" style="top:1560px"><div class="vd" style="left:198px"></div><div class="vd" style="left:980px"></div><div class="vd" style="left:2008px"></div><div class="btng"><div class="l"><div class="cb chk"><svg width="22" height="22" viewBox="0 0 22 22" style="position:absolute;left:0;top:0"><path d="M5 11.5 L9.2 16 L17 5.5" fill="none" stroke="#fff" stroke-width="3" stroke-linecap="round" stroke-linejoin="round"/></svg></div></div><svg class="chev" width="16" height="12" viewBox="0 0 16 12"><path d="M2 3 L8 9 L14 3" fill="none" stroke="#404c59" stroke-width="1.6"/></svg></div><div style="position:absolute;left:230.00px;top:25px;font-size:27px;line-height:40px;color:#404c59;white-space:nowrap;transform:scaleX(0.9983);transform-origin:0 0;">Cards2 (bad-theme)</div><div style="position:absolute;left:1012.12px;top:25px;font-size:27px;line-height:40px;color:#4e5e9e;white-space:nowrap;transform:scaleX(1.0416);transform-origin:0 0;">Mautic</div><div class="bdg" style="left:2040px;width:70px"><div style="position:absolute;left:7.74px;top:9px;line-height:30px;transform:scaleX(0.9564);transform-origin:0 0">Email</div></div></div>
<div class="row g" style="top:1650px"><div class="vd" style="left:198px"></div><div class="vd" style="left:980px"></div><div class="vd" style="left:2008px"></div><div class="btng"><div class="l"><div class="cb"></div></div><svg class="chev" width="16" height="12" viewBox="0 0 16 12"><path d="M2 3 L8 9 L14 3" fill="none" stroke="#404c59" stroke-width="1.6"/></svg></div><div style="position:absolute;left:228.93px;top:25px;font-size:27px;line-height:40px;color:#404c59;white-space:nowrap;transform:scaleX(1.0348);transform-origin:0 0;">Neopolitan (neopolitan)</div><div style="position:absolute;left:1012.18px;top:25px;font-size:27px;line-height:40px;color:#4e5e9e;white-space:nowrap;transform:scaleX(1.0123);transform-origin:0 0;">Mautic team based on a theme by Sendwithus</div><div class="bdg" style="left:2040px;width:63px"><div style="position:absolute;left:7.58px;top:9px;line-height:30px;transform:scaleX(0.9200);transform-origin:0 0">Page</div></div><div class="bdg" style="left:2109.8px;width:70px"><div style="position:absolute;left:7.74px;top:9px;line-height:30px;transform:scaleX(0.9564);transform-origin:0 0">Email</div></div><div class="bdg" style="left:2186.6000000000004px;width:66.5px"><div style="position:absolute;left:7.13px;top:9px;line-height:30px;transform:scaleX(0.9673);transform-origin:0 0">Form</div></div></div>
<div id="redbox"></div>
</body></html>
